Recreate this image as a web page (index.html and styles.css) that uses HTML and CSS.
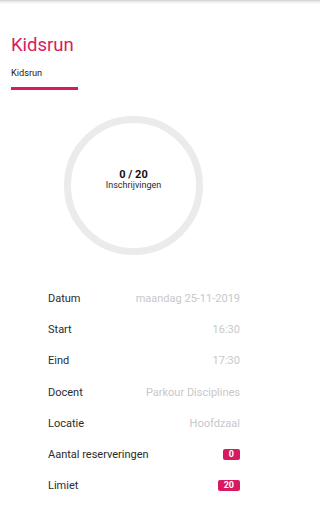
FILE: index.html
```html
<!DOCTYPE html>
<html lang="nl">
<head>
<meta charset="utf-8">
<title>Kidsrun</title>
<link rel="stylesheet" href="styles.css">
</head>
<body>
<div class="topshadow"></div>
<header class="header">
  <h1 class="title">Kidsrun</h1>
  <div class="tab">Kidsrun</div>
  <div class="tab-indicator"></div>
</header>
<section class="progress">
  <div class="ring">
    <div class="count">0 / 20</div>
    <div class="count-label">Inschrijvingen</div>
  </div>
</section>
<section class="details">
  <div class="row"><span class="label">Datum</span><span class="value">maandag 25-11-2019</span></div>
  <div class="row"><span class="label">Start</span><span class="value">16:30</span></div>
  <div class="row"><span class="label">Eind</span><span class="value">17:30</span></div>
  <div class="row"><span class="label">Docent</span><span class="value">Parkour Disciplines</span></div>
  <div class="row"><span class="label">Locatie</span><span class="value">Hoofdzaal</span></div>
  <div class="row"><span class="label">Aantal reserveringen</span><span class="badge">0</span></div>
  <div class="row"><span class="label">Limiet</span><span class="badge">20</span></div>
</section>
</body>
</html>
```
FILE: styles.css
```css
html, body {
  margin: 0;
  padding: 0;
  background: #ffffff;
}
body {
  font-family: Roboto, "Noto Sans", "Liberation Sans", sans-serif;
  color: #212121;
  overflow: hidden;
}
.topshadow {
  height: 4px;
  background: linear-gradient(to bottom, #cfcfcf 0%, #e6e6e6 35%, #f7f7f7 75%, #ffffff 100%);
}
.header {
  padding-left: 11px;
  padding-top: 31px;
}
.title {
  margin: 0;
  font-size: 18.5px;
  font-weight: 400;
  line-height: 21.6px;
  color: #d81b60;
}
.tab {
  margin-top: 11.4px;
  font-size: 9.2px;
  line-height: 10.8px;
  color: #1a1a1a;
}
.tab-indicator {
  margin-top: 8px;
  width: 67px;
  height: 3px;
  background: #d81b60;
}
.progress {
  margin-top: 26.3px;
  padding-left: 64px;
}
.ring {
  width: 139px;
  height: 139px;
  box-sizing: border-box;
  border: 7px solid #ebebeb;
  border-radius: 50%;
  padding-top: 46px;
  text-align: center;
}
.count {
  font-size: 11px;
  font-weight: 700;
  line-height: 12px;
  color: #111111;
}
.count-label {
  font-size: 9px;
  line-height: 11px;
  margin-top: -1px;
  color: #2a2a2a;
}
.details {
  margin-top: 27.8px;
  padding-left: 48px;
  width: 192px;
}
.row {
  height: 31.2px;
  display: flex;
  align-items: center;
  justify-content: space-between;
  font-size: 11px;
}
.label {
  color: #2b2b2b;
}
.value {
  color: #c8c8c8;
}
.badge {
  height: 11px;
  line-height: 11px;
  padding: 0 6px;
  border-radius: 2px;
  background: #d81b60;
  color: #ffffff;
  font-size: 9px;
  font-weight: 700;
}
```
